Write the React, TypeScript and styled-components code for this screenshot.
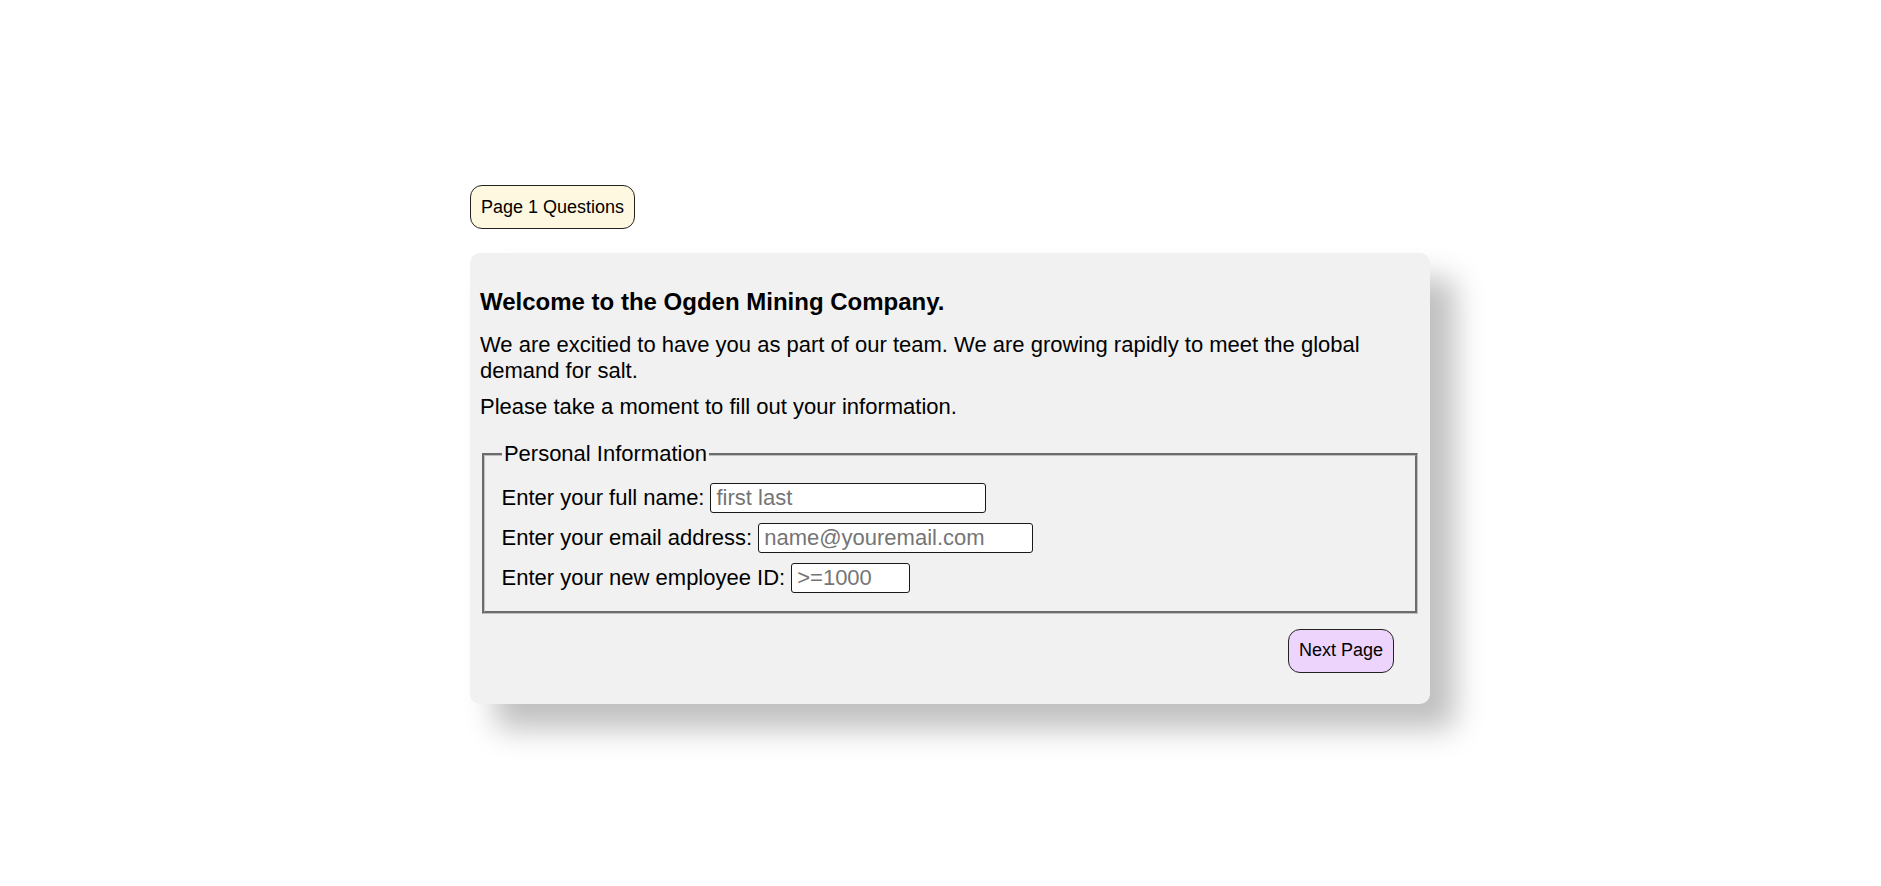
import styled, { createGlobalStyle } from "styled-components";

const GlobalStyle = createGlobalStyle`
  html {
    background: #ffffff;
  }
  body {
    margin: 0;
    min-height: 100vh;
    box-sizing: border-box;
    padding: 185px 0 120px 19px;
    background: #ffffff;
    color: #000000;
    font-family: "Liberation Sans", Arial, sans-serif;
  }
`;

export default function App() {
  return (
    <>
      <GlobalStyle />
      <Page>
        <TopBar>
          <PillBtn $bg="#fff8e0">Page 1 Questions</PillBtn>
        </TopBar>

        <Card>
          <Title>Welcome to the Ogden Mining Company.</Title>
          <Para>
            We are excitied to have you as part of our team. We are growing
            rapidly to meet the global demand for salt.
          </Para>
          <Para $last>Please take a moment to fill out your information.</Para>

          {/* personal info */}
          <Fields>
            <Legend>Personal Information</Legend>
            <Rows>
              <Row>
                <Label htmlFor="fullname">Enter your full name:</Label>
                <Input id="fullname" type="text" placeholder="first last" $w={276} />
              </Row>
              <Row>
                <Label htmlFor="email">Enter your email address:</Label>
                <Input id="email" type="email" placeholder="name@youremail.com" $w={275} />
              </Row>
              <Row>
                <Label htmlFor="empid">Enter your new employee ID:</Label>
                <Input id="empid" type="text" placeholder=">=1000" $w={119} />
              </Row>
            </Rows>
          </Fields>

          <Footer>
            <PillBtn $bg="#ecd4fc">Next Page</PillBtn>
          </Footer>
        </Card>
      </Page>
    </>
  );
}

const Page = styled.main`
  width: 960px;
  margin: 0 auto;
  display: flex;
  flex-direction: column;
  gap: 24px;
`;
const TopBar = styled.div`
  display: flex;
`;

interface PillProps {
  $bg: string;
}
const PillBtn = styled.button<PillProps>`
  box-sizing: border-box;
  height: 44px;
  padding: 0 10px;
  font-family: inherit;
  font-size: 18px;
  color: #000;
  background: ${(props) => props.$bg};
  border: 1px solid #222;
  border-radius: 12px;
  cursor: pointer;
`;

const Card = styled.section`
  box-sizing: border-box;
  display: flex;
  flex-direction: column;
  padding: 10px;
  background: #f1f1f1;
  border-radius: 10px;
  box-shadow: 25px 25px 30px rgba(0, 0, 0, 0.25);
`;
const Title = styled.h3`
  margin: 25px 0 16px;
  font-size: 24px;
  font-weight: bold;
  line-height: normal;
`;
const Para = styled.p<{ $last?: boolean }>`
  margin: 0 0 ${(props) => (props.$last ? "21px" : "10px")};
  font-size: 22px;
  line-height: normal;
`;

const Fields = styled.fieldset`
  margin: 0 2px;
  padding: 0 16.5px 12px;
  border: 3px groove rgb(192, 192, 192);
  font-size: 22px;
`;
const Legend = styled.legend`
  padding: 0 2.4px;
  font-size: 22px;
`;
const Rows = styled.div`
  display: flex;
  flex-direction: column;
  gap: 10px;
  padding: 16px 0 5.5px;
`;
const Row = styled.div`
  display: flex;
  align-items: center;
  gap: 6px;
`;
const Label = styled.label`
  font-size: 22px;
`;
const Input = styled.input<{ $w: number }>`
  box-sizing: border-box;
  width: ${(props) => props.$w}px;
  height: 30px;
  padding: 0 5px;
  font-family: inherit;
  font-size: 22px;
  color: #000;
  background: #ffffff;
  border: 1px solid #1a1a1a;
  border-radius: 3px;

  &::placeholder {
    color: #757575;
  }
`;

const Footer = styled.div`
  display: flex;
  justify-content: flex-end;
  margin: 15px 26px 21px 0;
`;
